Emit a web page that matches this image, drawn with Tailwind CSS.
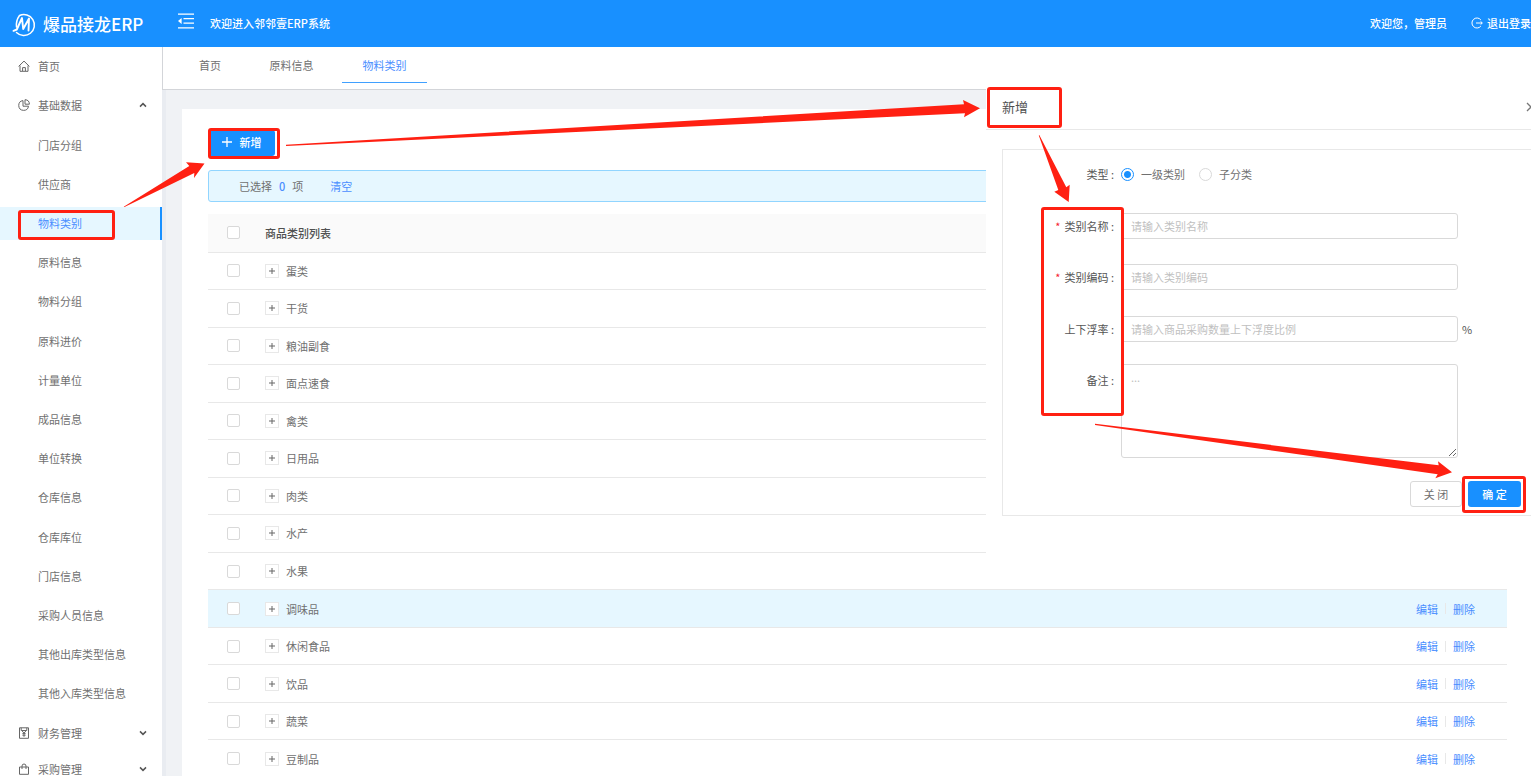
<!DOCTYPE html>
<html lang="zh-CN">
<head>
<meta charset="utf-8">
<title>爆品接龙ERP</title>
<script src="https://cdn.jsdelivr.net/npm/@tailwindcss/browser@4"></script>
</head>
<body class="font-['Noto_Sans_CJK_SC',sans-serif] text-[11px] leading-4 text-[#707070]">
<div class="relative flex h-screen flex-col overflow-hidden bg-[#f0f2f5]">

  <header class="flex h-[47px] shrink-0 items-center bg-[#1890ff] pb-[2px] font-medium text-white">
    <div class="flex w-[177px] items-center gap-[7px] pl-3">
      <svg class="mt-1 size-6" viewBox="0 0 24 24" fill="none" stroke="currentColor" stroke-linecap="round" stroke-linejoin="round"><path stroke-width="1.5" d="M7.500 2.500A10.500 10.500 0 1 1 4.500 19.500M7.500 2.500C5 6 4 10 4.500 14"/><path stroke-width="1.900" d="M1.500 17.800 4.800 16.500 10 5 11.200 16 17 5.500 16.500 17.500"/></svg>
      <h1 class="pt-[2px] text-[17px] leading-6 font-medium">爆品接龙ERP</h1>
    </div>
    <button type="button" aria-label="收起菜单" class="mb-1 h-4 w-[17px]">
      <svg class="h-4 w-[17px]" viewBox="0 0 17 16" fill="none" stroke="currentColor" stroke-width="1.3"><path d="M1 1.2H17M6.5 5.7H17M6.5 10.2H17M1 14.8H17"/><path fill="currentColor" stroke="none" d="M4.6 5V11L1 8Z"/></svg>
    </button>
    <span class="ml-4">欢迎进入邻邻壹ERP系统</span>
    <span class="ml-auto">欢迎您，管理员</span>
    <a href="#" class="ml-6 flex items-center gap-1">
      <svg class="size-3" viewBox="0 0 12 12" fill="none" stroke="currentColor" stroke-width="1"><path d="M9.8 2.8A5 5 0 1 0 9.8 9.2M5 6H11.2M9.6 4.4 11.3 6 9.6 7.6"/></svg>
      退出登录
    </a>
  </header>

  <div class="flex min-h-0 flex-1">
    <aside class="w-[162px] shrink-0 overflow-hidden bg-white">
      <nav>
        <a href="#" class="flex h-[39px] items-center pb-px pl-[18px]">
          <svg class="mr-2 size-3" viewBox="0 0 12 12" fill="none" stroke="#666"><path d="M.6 6.4 6 1.1 11.4 6.4M2 5.6V11.3H10V5.6M4.6 11V7.6H7.4V11"/></svg>首页</a>
        <button type="button" class="flex h-[39px] w-full items-center pr-[14px] pb-px pl-[18px]">
          <svg class="mr-2 size-3" viewBox="0 0 12 12" fill="none" stroke="#666"><path d="M5 1.6A4.9 4.9 0 1 0 10.5 7.2H5ZM7 .7V5.2H11.4A4.6 4.6 0 0 0 7 .7Z"/></svg>基础数据
          <svg class="ml-auto h-2 w-[10px]" viewBox="0 0 10 8" fill="none" stroke="#555" stroke-width="1.5"><path d="M2 5.6 5 2.6 8 5.6"/></svg></button>
        <ul id="submenu" class="mt-1 mb-1 flex h-[582px] flex-col justify-between"></ul>
        <button type="button" class="flex h-[36px] w-full items-center pr-[14px] pb-px pl-[18px]">
          <svg class="mr-2 size-3" viewBox="0 0 12 12" fill="none" stroke="#666"><path d="M1.5 .8H10.5V11.3H1.5ZM3.2 .8V3.5H8.8V.8M4.2 4 6 6.2 7.8 4M6 6.2V9.8M4.4 6.6H7.6M4.4 8.2H7.6"/></svg>财务管理
          <svg class="ml-auto h-2 w-[10px]" viewBox="0 0 10 8" fill="none" stroke="#555" stroke-width="1.5"><path d="M2 2.4 5 5.4 8 2.4"/></svg></button>
        <button type="button" class="flex h-[36px] w-full items-center pr-[14px] pb-px pl-[18px]">
          <svg class="mr-2 size-3" viewBox="0 0 12 12" fill="none" stroke="#666"><path d="M1.5 4H10.5V11.3H1.5ZM4 6V3A2 2 0 0 1 8 3V6"/></svg>采购管理
          <svg class="ml-auto h-2 w-[10px]" viewBox="0 0 10 8" fill="none" stroke="#555" stroke-width="1.5"><path d="M2 2.4 5 5.4 8 2.4"/></svg></button>
      </nav>
    </aside>

    <main class="flex min-w-0 flex-1 flex-col border-l-4 border-[#e9ecf1]">
      <nav class="-ml-1 flex h-[43px] shrink-0 border-b border-l border-[#d3d5d9] bg-white pl-4 text-center">
        <a href="#" class="h-9 w-[62px] pt-[10px]">首页</a>
        <a href="#" class="ml-2 h-9 w-[85px] pt-[10px]">原料信息</a>
        <a href="#" class="ml-2 h-9 w-[85px] border-b border-[#40a0ff] pt-[10px] text-[#4a8eff]">物料类别</a>
      </nav>

      <section class="mt-[19px] ml-4 flex-1 bg-white pt-[21px] pr-6 pl-[26px]">
        <button type="button" class="flex h-[26px] w-[67px] items-center justify-center gap-2 rounded-[3px] bg-[#1890ff] pb-[2px] font-medium text-white">
          <svg class="size-[10px]" viewBox="0 0 10 10" stroke="currentColor" stroke-width="1.3"><path d="M5 0V10M0 5H10"/></svg>新增</button>
        <div class="mt-[14px] flex h-8 items-center rounded-[3px] border border-[#91d5ff] bg-[#e6f7ff] pb-px pl-[30px]">
          已选择<b class="mx-[7px] font-medium text-[#4a8eff]">0</b>项
          <a href="#" class="ml-[27px] text-[#4a8eff]">清空</a>
        </div>
        <table class="mt-3 h-[564px] w-full border-collapse text-left">
          <thead>
            <tr class="h-[38px] border-b border-[#e8e8e8] bg-[#fafafa] text-[#505050]">
              <th class="w-[57px] pl-[19px]"><input type="checkbox" aria-label="全选" class="block size-[13px] appearance-none rounded-[2px] border border-[#d9d9d9] bg-white"></th>
              <th class="font-medium">商品类别列表</th>
              <th class="w-[200px]"></th>
            </tr>
          </thead>
          <tbody id="rows"></tbody>
        </table>
      </section>
    </main>
  </div>

  <section aria-labelledby="drawer-title" class="absolute top-[89px] right-0 h-[500px] w-[545px] overflow-hidden bg-white text-[#555]">
    <div class="flex h-[41px] items-center border-b border-[#e8e8e8] pl-4">
      <h2 id="drawer-title" class="mb-1 text-[13px] leading-5 text-[#505050]">新增</h2>
      <button type="button" aria-label="关闭抽屉" class="-mr-[5px] mb-1 ml-auto">
        <svg class="size-[10px]" viewBox="0 0 10 10" stroke="#777" stroke-width="1.3"><path d="M1 1 9 9M9 1 1 9"/></svg></button>
    </div>
    <form class="mt-[19px] ml-4 h-[367px] border-y border-l border-[#e8e8e8] pt-[11px] pr-[10px]">
      <div class="mb-[26px] flex h-[26px] items-center" role="radiogroup" aria-label="类型">
        <span class="w-[118px] pr-[7px] text-right">类型 :</span>
        <label class="flex items-center gap-[7px] text-[#707070]"><input type="radio" name="kind" checked class="size-[13px] appearance-none rounded-full border border-[#1890ff] bg-white bg-[radial-gradient(circle,#1890ff_3px,transparent_4px)]">一级类别</label>
        <label class="ml-[14px] flex items-center gap-[7px] text-[#707070]"><input type="radio" name="kind" class="size-[13px] appearance-none rounded-full border border-[#d9d9d9] bg-white">子分类</label>
      </div>
      <div class="mb-[25px] flex h-[26px] items-center">
        <label for="name" class="w-[118px] pr-[7px] text-right"><span class="mr-1 text-[#f5222d]">*</span>类别名称 :</label>
        <input id="name" placeholder="请输入类别名称" class="h-full w-[337px] rounded-[3px] border border-[#d9d9d9] px-[9px] placeholder:text-[#bfbfbf]">
      </div>
      <div class="mb-[26px] flex h-[26px] items-center">
        <label for="code" class="w-[118px] pr-[7px] text-right"><span class="mr-1 text-[#f5222d]">*</span>类别编码 :</label>
        <input id="code" placeholder="请输入类别编码" class="h-full w-[337px] rounded-[3px] border border-[#d9d9d9] px-[9px] placeholder:text-[#bfbfbf]">
      </div>
      <div class="mb-[22px] flex h-[26px] items-center">
        <label for="rate" class="w-[118px] pr-[7px] text-right">上下浮率 :</label>
        <input id="rate" placeholder="请输入商品采购数量上下浮度比例" class="h-full w-[337px] rounded-[3px] border border-[#d9d9d9] px-[9px] placeholder:text-[#bfbfbf]">
        <span class="ml-1">%</span>
      </div>
      <div class="flex items-start">
        <label for="note" class="w-[118px] pt-2 pr-[7px] text-right">备注 :</label>
        <textarea id="note" placeholder="..." class="block h-[94px] w-[337px] rounded-[3px] border border-[#d9d9d9] px-[9px] py-1 placeholder:text-[#bfbfbf]"></textarea>
      </div>
      <div class="mt-[23px] flex justify-end gap-[6px]">
        <button type="button" class="h-[26px] w-[52px] rounded-[3px] border border-[#d9d9d9] bg-white pb-px text-[#707070]">关 闭</button>
        <button type="submit" class="h-[26px] w-[53px] rounded-[3px] bg-[#1890ff] pb-px font-medium text-white">确 定</button>
      </div>
    </form>
  </section>

  <!-- Step markers and arrows of the walkthrough -->
  <svg class="pointer-events-none absolute top-0 left-0 h-[776px] w-[1531px]" viewBox="0 0 1531 776" fill="#ff2012" aria-hidden="true">
    <g fill="none" stroke="#ff2012" stroke-width="3">
      <rect x="19.5" y="211.5" width="94" height="27" rx="1.5"/>
      <rect x="209.5" y="129.5" width="69" height="28" rx="1.5"/>
      <rect x="988.5" y="88.5" width="72" height="38" rx="1.5"/>
      <rect x="1042.5" y="208.5" width="80" height="206" rx="1.5"/>
      <rect x="1463.5" y="477.5" width="61" height="34" rx="1.5"/>
    </g>
    <path d="M123.7 206.7 189.3 166 186 162.3 204.5 163.5 194 178 194.3 173 124.5 207Z"/>
    <path d="M286 144.8 964 104.3 963 100 980 108.3 964 117.3 965 113.3 286 146Z"/>
    <path d="M1039.3 135 1066.3 187.3 1069.7 184.7 1068.7 202 1054.3 191.7 1058.3 190 1038.8 135.5Z"/>
    <path d="M1095 423.7 1438.7 465.3 1438 461.3 1452 472.3 1435.3 478.3 1437.7 474.3 1095 425Z"/>
  </svg>
</div>

<script>
  const menu = ['门店分组','供应商','物料类别','原料信息','物料分组','原料进价','计量单位','成品信息','单位转换','仓库信息','仓库库位','门店信息','采购人员信息','其他出库类型信息','其他入库类型信息'];
  document.getElementById('submenu').innerHTML = menu.map(t => {
    const c = t === '物料类别'
      ? 'flex h-[33px] items-center border-r-2 border-[#1890ff] bg-[#e6f7ff] pb-[2px] pl-[38px] text-[#4a8eff]'
      : 'flex h-[33px] items-center pb-[2px] pl-[38px]';
    return `<li><a href="#" class="${c}">${t}</a></li>`;
  }).join('');

  const rows = ['蛋类','干货','粮油副食','面点速食','禽类','日用品','肉类','水产','水果','调味品','休闲食品','饮品','蔬菜','豆制品'];
  const firstEditable = rows.indexOf('调味品');
  const actions = '<div class="flex items-center justify-end pr-8 text-[#4a8eff]"><a href="#">编辑</a><span class="mx-[7px] h-[11px] w-px bg-[#e8e8e8]"></span><a href="#">删除</a></div>';
  document.getElementById('rows').innerHTML = rows.map((t, i) => {
    const c = i === firstEditable ? 'border-b border-[#e8e8e8] bg-[#e6f7ff]' : 'border-b border-[#e8e8e8]';
    return `<tr class="${c}">
      <td class="pl-[19px]"><input type="checkbox" aria-label="选择${t}" class="block size-[13px] appearance-none rounded-[2px] border border-[#d9d9d9] bg-white"></td>
      <td><div class="flex items-center gap-[7px]"><button type="button" aria-label="展开${t}" class="flex size-[14px] items-center justify-center border border-[#e8e8e8] bg-white"><svg class="size-[6px]" viewBox="0 0 6 6" stroke="#666"><path d="M3 0V6M0 3H6"/></svg></button>${t}</div></td>
      <td>${i >= firstEditable ? actions : ''}</td>
    </tr>`;
  }).join('');
</script>
</body>
</html>
